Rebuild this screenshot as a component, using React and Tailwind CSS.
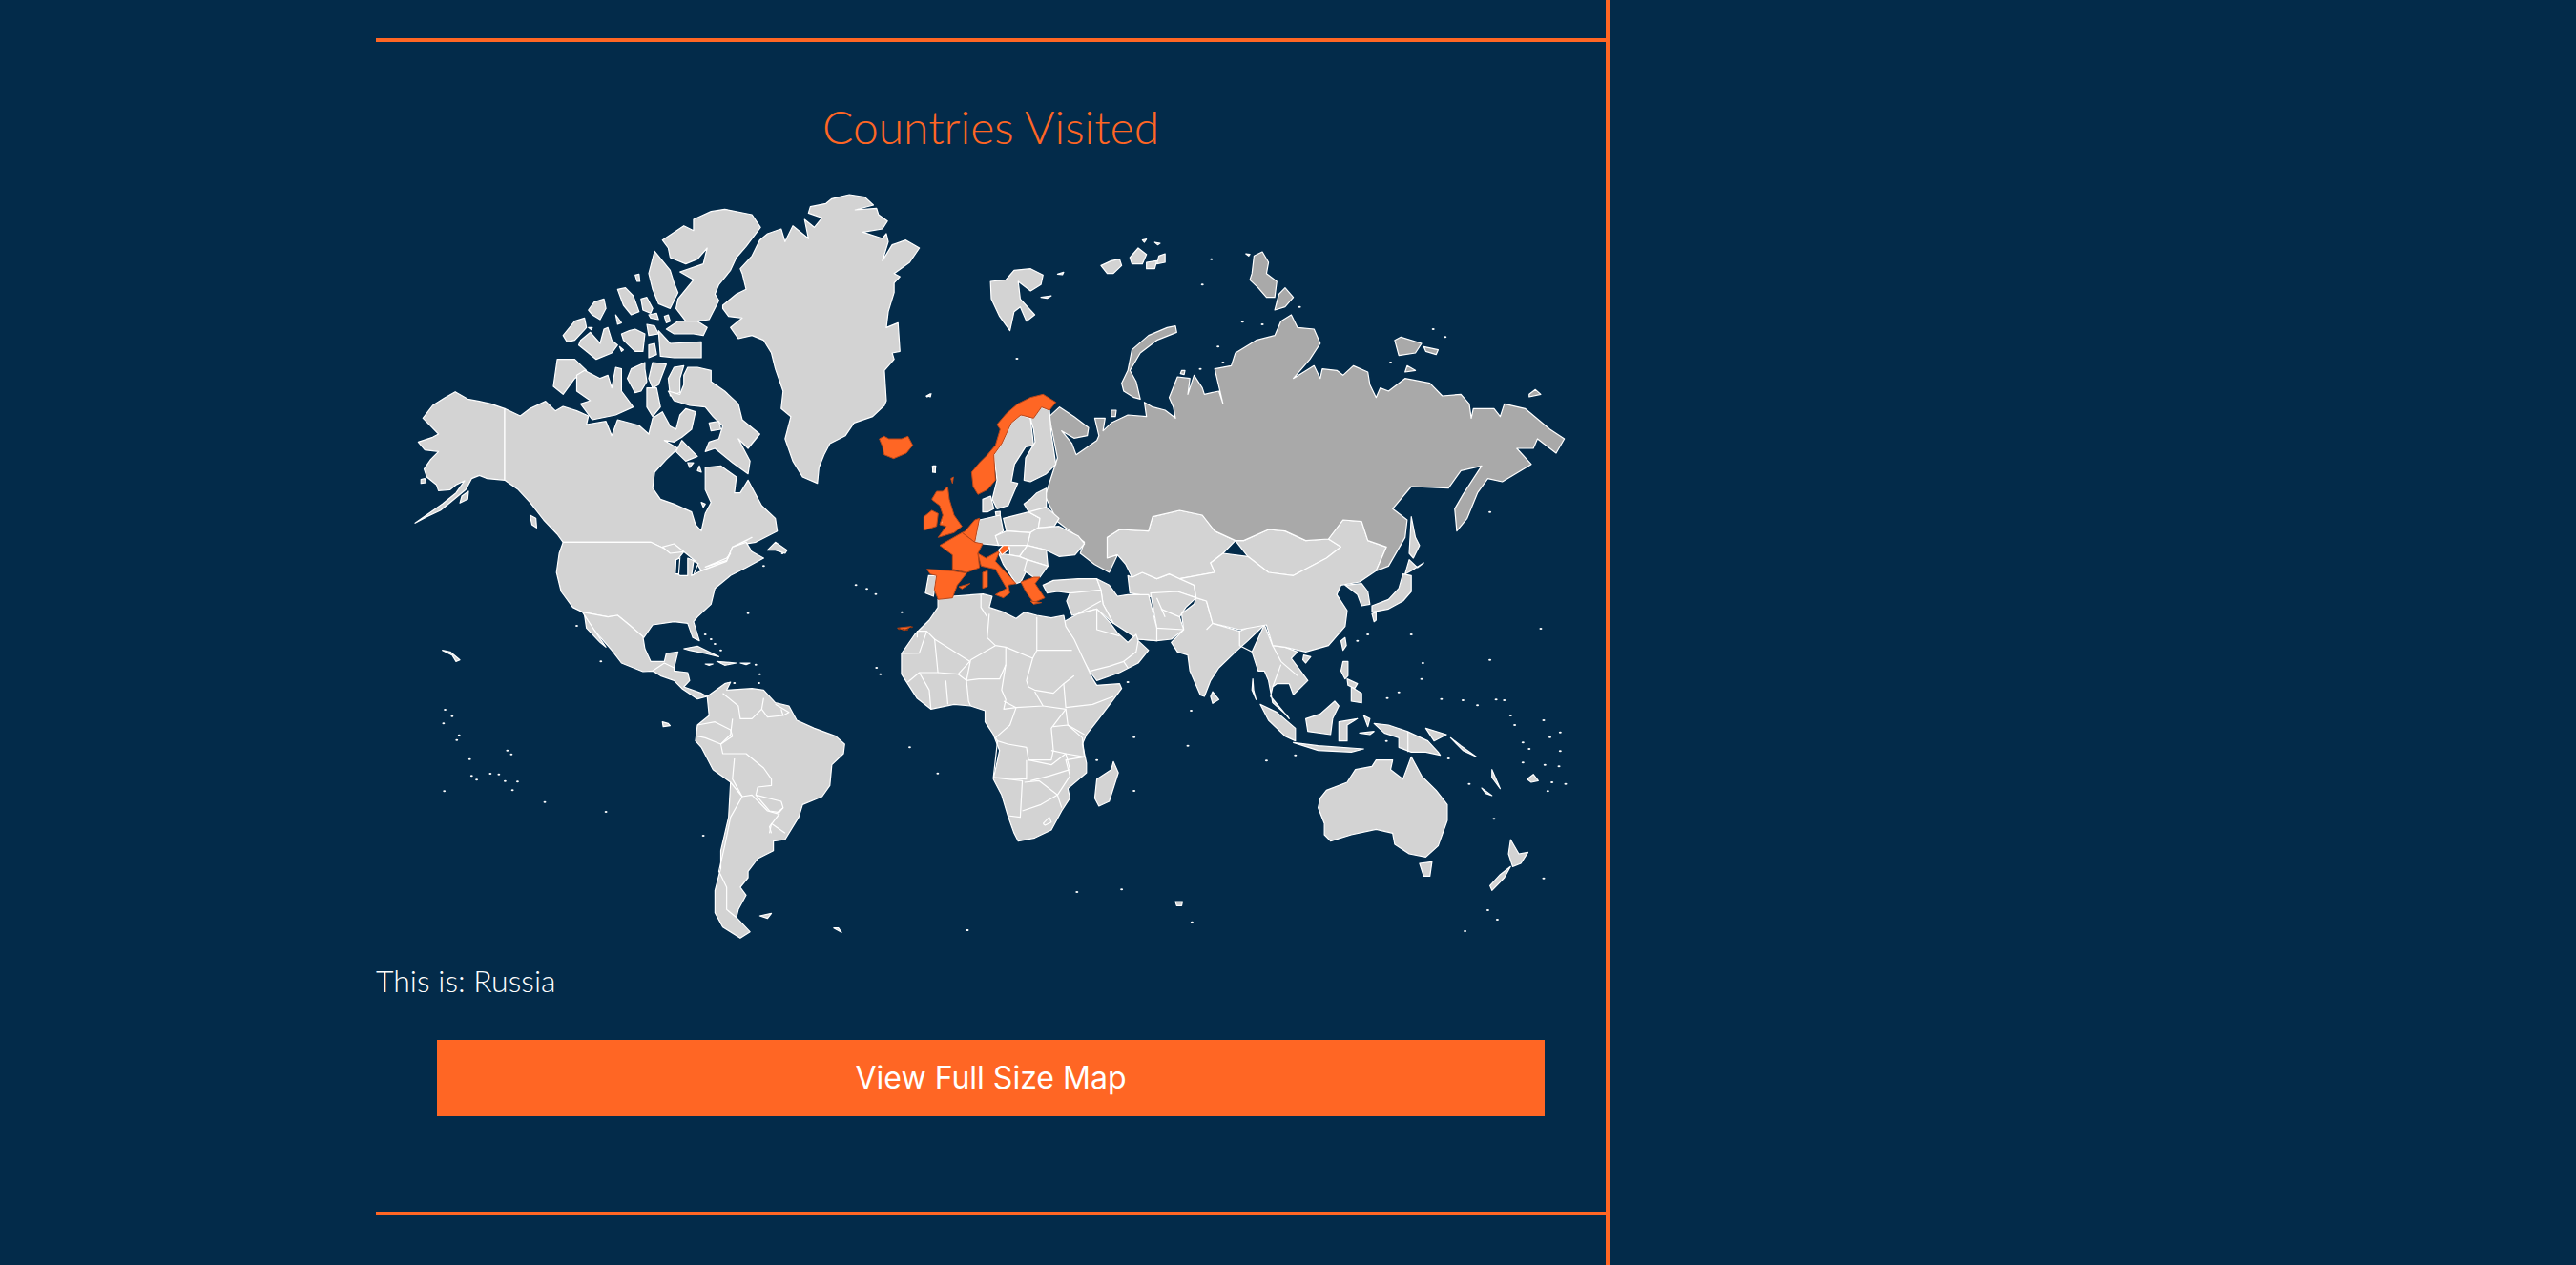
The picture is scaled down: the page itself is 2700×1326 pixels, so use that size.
import React from "react";

const LAND = "#d3d3d3";
const RUS = "#a9a9a9";
const ORG = "#ff6624";
const BG = "#032b4a";

// Coordinates below are traced in page-sized frames; each frame maps by translate + scale.
const FR = {
  W: "translate(380 180) scale(0.40816 0.33333)",
  W3: "translate(380 580) scale(0.40816 0.33333)",
  E: "translate(1000 180) scale(0.43367 0.33333)",
  E4: "translate(1000 580) scale(0.43367 0.33333)",
  EU: "translate(920 380) scale(0.33333 0.33333)",
};

const west = [
  // Alaska
  "365,745 330,730 300,722 270,715 238,692 210,712 180,735 155,775 175,800 195,825 180,835 143,850 160,875 195,880 175,905 158,935 165,960 190,985 195,1003 225,1000 240,985 262,972 240,1010 205,1045 170,1075 135,1105 165,1085 200,1065 225,1040 265,1000 280,965 300,955 320,965 365,970",
  "150,968 160,965 163,978 150,980",
  "255,1020 272,1005 270,1030 250,1042",
  // Canada
  "365,745 405,768 430,745 470,722 495,752 515,738 550,752 580,768 575,795 625,785 640,830 655,780 710,798 735,825 745,775 770,755 790,800 805,810 815,765 830,745 855,755 845,810 820,835 800,850 775,845 810,870 780,905 750,945 745,995 765,1030 800,1045 845,1070 855,1110 870,1130 880,1075 895,1040 880,1000 880,930 920,925 960,960 955,1010 970,1010 990,970 1025,1050 1060,1090 1065,1130 1010,1165 960,1175 985,1160 1000,1150 950,1180 935,1225 870,1255 855,1225 825,1195 775,1185 740,1165 515,1165 500,1140 465,1095 430,1040 400,1000 365,970",
  "1040,1190 1060,1165 1090,1190 1085,1200 1060,1190",
  "430,1080 445,1090 447,1120 435,1110",
  // USA
  "515,1165 740,1165 775,1185 825,1195 812,1215 803,1260 815,1270 835,1270 835,1215 855,1225 845,1270 870,1255 935,1225 950,1180 985,1165 1000,1195 1030,1215 985,1245 945,1270 905,1310 895,1360 860,1400 850,1415 865,1475 848,1465 835,1420 800,1415 745,1425 722,1465 685,1425 655,1395 630,1400 565,1385 540,1370 510,1320 498,1260 505,1200",
  "770,1180 800,1170 825,1195 790,1200",
  "880,1243 935,1222 945,1200 935,1215",
  // Mexico
  "565,1385 630,1400 655,1395 685,1425 720,1462 725,1500 740,1540 775,1540 780,1515 810,1510 800,1560 760,1575 745,1570 720,1572 665,1545 640,1505 590,1435",
  "570,1395 600,1450 625,1495 610,1480 575,1435",
  // Central America
  "745,1570 775,1545 800,1560 800,1570 835,1575 840,1600 825,1620 870,1640 885,1650 860,1658 820,1625 800,1600 765,1585",
  // Greenland
  "925,420 960,385 985,370 975,320 970,305 1000,265 1020,215 1040,195 1075,180 1085,220 1105,170 1145,210 1135,150 1160,175 1180,145 1145,130 1150,110 1190,100 1205,85 1250,72 1290,80 1312,105 1265,120 1320,115 1325,135 1348,155 1335,180 1285,190 1335,210 1345,195 1350,220 1335,280 1360,230 1395,215 1430,240 1405,285 1365,320 1380,330 1365,350 1365,380 1350,440 1345,490 1375,475 1380,565 1360,570 1365,590 1340,625 1345,720 1340,735 1310,770 1262,790 1240,830 1200,855 1185,890 1172,930 1168,980 1130,960 1105,910 1085,840 1100,770 1075,745 1080,690 1060,620 1050,570 1030,530 1000,515 965,525 945,490 975,460 940,455 925,430",
  // Ellesmere
  "770,215 825,170 850,185 850,150 895,125 930,118 1000,135 1022,175 985,235 960,270 945,310 915,355 905,385 915,405 890,465 860,470 830,470 805,430 810,400 830,370 850,340 815,315 875,290 885,240 860,275 830,290 790,270 785,240",
  "735,320 750,250 790,310 800,350 810,380 790,430 760,415 745,370",
  "780,495 810,470 860,470 885,490 875,515 850,510 800,510",
  "760,500 790,540 870,535 870,585 800,585 765,580",
  "655,370 675,365 695,390 710,440 690,450 670,420",
  "715,400 730,395 745,430 740,445 720,435",
  "735,450 755,445 760,465 740,460",
  "775,455 785,450 790,470 780,475",
  "595,410 620,400 625,430 610,465 590,450 580,435",
  "650,450 665,475 655,480",
  "515,515 545,470 570,460 575,490 545,530 525,535",
  "560,530 585,505 610,540 620,495 630,490 640,530 655,545 640,570 600,590 580,570 555,545",
  "665,510 685,500 700,495 725,510 720,565 700,565 670,530",
  "730,480 750,485 760,510 735,515",
  "735,545 750,540 755,575 735,585",
  "700,325 710,322 712,345 705,345",
  "660,550 670,560 665,565",
  "580,490 590,490 588,497",
  "500,590 545,590 575,625 545,650 515,700 490,675",
  "550,640 570,625 610,650 630,640 640,680 650,615 665,620 665,690 695,740 650,765 590,780 560,730 585,720 550,690",
  "690,620 725,600 725,620 730,660 715,690 700,695 680,650",
  "745,600 780,605 760,670 745,680 735,650",
  "785,650 800,615 825,610 815,650 815,695 790,705",
  "825,640 835,615 860,615 895,625 895,660 930,690 965,730 975,780 1020,825 990,870 965,840 995,910 990,950 950,915 905,870 880,880 890,850 915,840 925,800 900,770 880,740 840,735 800,720 785,690 815,700 825,670",
  "805,880 820,845 860,895 830,910",
  "730,680 755,680 765,740 745,770 730,740",
  "890,790 915,785 920,810 895,815",
  "835,915 850,915 840,930",
  "865,925 870,945 860,940",
  "870,1040 880,1045 875,1055",
  "1465,925 1472,925 1470,945 1464,945",
  "1450,705 1460,698 1458,708",
];

const west3 = [
  "825,300 860,292 915,325 880,315 840,305",
  "910,340 960,345 930,352",
  "880,348 900,348 890,352",
  "970,345 995,345 985,350",
  // South America
  "885,450 930,410 945,405 935,430 1000,425 1030,430 1060,470 1095,480 1115,525 1160,550 1215,575 1238,600 1235,630 1205,665 1200,730 1180,765 1130,790 1120,830 1085,900 1055,905 1055,935 1015,960 990,1000 990,1020 970,1050 985,1075 965,1120 960,1145 995,1190 970,1210 925,1175 905,1130 905,1060 920,990 920,935 940,830 945,720 900,680 870,610 855,590 860,540 890,510",
  "1020,1140 1050,1132 1040,1148",
  "1210,1178 1222,1178 1230,1192",
  "205,305 225,310 245,330 250,335 240,340 230,320",
  "770,530 785,535 790,542 772,545",
];

const westBorders = [
  "925,440 965,480 970,520 1000,520 1025,490 1030,455",
  "1025,490 1040,515 1080,510 1095,500 1060,475",
  "1080,510 1075,490",
  "860,540 905,530 945,555 950,575 920,600 880,580 860,575",
  "950,520 945,570 920,600 925,630 985,630 1030,675 1050,710 1050,730 1015,735 1010,760 1075,780 1080,800 1065,815",
  "955,645 950,710 975,765",
  "945,720 975,765 945,830 930,920 915,1000 935,1050 935,1120 960,1145",
  "975,765 1000,760 1040,810 1070,820 1045,860 1050,880",
  "1045,880 1050,850 1085,880",
  "1010,760 1045,810 1070,815 1080,800",
  "1450,0 1445,135",
];

const west3Dots = "212,492 230,512 208,535 248,572 242,587 275,647 280,700 293,712 328,693 350,695 366,716 398,718 385,745 210,748 468,782 625,813 875,888 372,620 382,632 612,340 550,228 1405,610 1477,692 1267,100 1295,112 1318,128 990,188 1385,185 1320,360 1330,380 1553,1185 1308,1258 880,255 895,270 905,285 920,305 1010,350 1020,380 1018,408 955,408 1030,40 1078,0";

const east = [
  // Novaya Zemlya
  "430,560 470,515 515,490 535,485 538,505 490,530 450,570 425,625 440,660 450,715 435,710 410,690 405,665 420,625",
  // Severnaya Zemlya
  "725,265 745,252 760,285 755,320 780,345 775,395 755,395 735,365 715,340 720,320",
  "785,385 800,365 820,395 800,425 775,435",
  "705,258 715,260 712,265",
  // New Siberian
  "1065,530 1080,520 1130,540 1115,570 1075,578",
  "1135,550 1170,560 1165,575 1140,565",
  "1095,610 1115,625 1090,630",
  "1390,700 1405,685 1418,700 1390,708",
  "380,750 392,750 390,770 380,770",
  "550,625 558,625 556,638 547,635",
];

const eastRussia = "230,770 255,740 290,770 325,805 322,830 290,838 260,815 285,855 295,890 345,845 350,830 340,775 365,775 360,815 380,790 420,765 465,770 460,725 480,740 510,750 535,775 530,740 520,710 540,645 570,650 565,700 580,640 600,680 605,700 640,690 650,730 630,620 670,610 680,570 730,530 775,515 790,470 815,450 830,490 870,495 885,540 860,590 820,650 870,610 885,650 890,620 925,625 940,640 965,610 1000,630 1005,670 1020,710 1030,680 1050,690 1090,650 1150,665 1180,705 1225,700 1245,730 1250,775 1255,745 1305,745 1320,770 1330,730 1380,745 1440,810 1475,840 1455,885 1410,840 1400,870 1360,870 1395,920 1325,975 1290,965 1265,1010 1240,1090 1215,1130 1210,1060 1230,1015 1275,925 1225,940 1195,995 1105,990 1060,1060 1095,1095 1090,1150 1050,1240 1020,1255 1045,1180 1000,1160 985,1100 940,1095 905,1155 850,1160 800,1130 760,1125 700,1160 680,1160 630,1130 600,1080 545,1065 480,1085 470,1130 400,1125 370,1150 370,1215 395,1205 375,1260 340,1235 305,1200 315,1165 250,1100 220,1020 250,900";

const eastGrey = [
  "1105,1085 1115,1150 1125,1175 1110,1215 1100,1200",
];

const eastLight = [
  // Svalbard
  "88,345 125,340 145,310 185,305 215,325 210,355 185,375 155,345 160,400 195,450 175,470 160,425 145,440 135,500 110,455 90,400",
  "250,322 265,316 262,324",
  "210,395 235,390 225,398",
  // Franz Josef
  "355,295 380,280 400,275 405,295 385,320 370,320",
  "425,270 445,240 465,260 455,290 430,290",
  "465,285 490,280 485,305 465,305",
  "495,265 510,258 510,285 490,290",
  "455,215 465,212 460,222",
  "485,222 498,225 492,230",
  // Kazakhstan
  "370,1150 400,1125 470,1130 480,1085 545,1065 600,1080 630,1130 680,1160 650,1200 620,1230 630,1260 545,1280 520,1265 490,1280 455,1260 430,1275 415,1235 395,1205 370,1215",
  // Mongolia
  "680,1160 700,1160 760,1125 800,1130 850,1160 905,1155 935,1180 900,1215 820,1270 760,1260 710,1210",
  // China
  "710,1210 760,1260 820,1270 900,1215 935,1180 905,1155 940,1095 985,1100 1000,1160 1045,1180 1020,1255 980,1290 935,1300 925,1330 950,1380 945,1430 905,1490 850,1510 800,1495 770,1490 755,1425 690,1440 625,1420 610,1350 585,1340 580,1300 545,1280 630,1260 620,1230 650,1200",
];

const e4Land = [
  // Central Asia
  "430,75 455,60 490,80 520,65 550,80 580,100 585,140 540,120 490,140 470,135 425,125 420,70",
  // Afghanistan + Pakistan
  "475,125 540,120 585,140 560,170 545,200 555,240 525,270 490,275 445,270 490,235",
  // Turkey
  "215,100 240,85 300,80 345,80 355,115 310,125 280,125 250,120 225,125",
  // Iran
  "345,80 375,100 395,135 420,130 470,130 490,235 490,275 445,270 415,245 385,220 360,160 355,115",
  // Levant + Iraq
  "280,125 355,115 360,160 385,220 345,175 300,190 285,195 272,150",
  // Arabia
  "265,215 300,190 345,175 375,215 395,250 420,280 440,255 445,275 470,305 445,345 400,375 345,400 330,375 300,310 270,250",
  // India
  "585,140 610,150 625,220 690,245 725,225 750,225 710,275 680,310 640,360 620,400 605,450 595,445 570,370 565,320 540,310 525,280 555,240 550,190 580,160",
  "625,435 640,460 625,472 620,450",
  // Indochina
  "720,310 750,225 770,290 800,295 830,310 815,330 855,400 820,445 810,410 780,410 770,420 765,450 810,520 805,510 770,470 760,400 750,370 735,370",
  // Korea
  "945,100 985,95 1000,120 1005,160 985,165 975,130",
  // Japan
  "1100,20 1120,45 1135,30 1105,55 1090,65",
  "1085,65 1105,70 1105,120 1085,150 1050,175 1010,185 1010,165 1050,145 1075,110",
  "1010,190 1020,185 1020,210 1015,215",
  "935,275 945,265 948,290 940,305",
  "845,320 862,325 850,345 843,335",
  // Philippines
  "940,340 952,340 952,385 945,395 935,370",
  "960,420 985,440 985,470 960,465",
  "950,395 975,410 968,425 952,415",
  // Borneo
  "850,520 885,505 920,465 930,480 915,520 910,570 855,560",
  // Sumatra
  "740,475 780,500 825,550 825,590 800,575 760,525",
  // Java
  "820,595 880,605 990,615 960,625 880,620",
  // Sulawesi
  "930,530 975,520 950,540 950,590 930,590",
  "980,565 1015,560 1005,570",
  "990,510 1005,520 1000,545",
  // New Guinea
  "1015,535 1050,540 1095,560 1145,590 1170,625 1175,635 1140,625 1105,625 1075,610 1075,580 1040,565",
  "1140,550 1190,570 1160,590",
  "1200,580 1225,605 1262,640 1230,620",
  "1300,680 1310,710 1320,740 1300,705",
  "1275,738 1300,762 1285,755",
  "1385,710 1400,695 1412,715 1395,720",
  // Andaman
  "722,395 720,430 730,460 724,430",
  // Australia
  "885,770 900,745 950,720 970,680 1010,670 1020,650 1060,650 1055,680 1085,710 1105,640 1130,700 1165,745 1192,790 1192,840 1170,920 1140,955 1100,945 1065,915 1060,880 1020,868 960,885 910,905 895,885 895,850 880,800",
  "1125,975 1155,970 1150,1015 1135,1015",
  // New Zealand
  "1345,900 1365,945 1387,940 1370,975 1350,985 1340,945",
  "1345,985 1330,1020 1300,1060 1295,1045 1320,1010",
  // Madagascar
  "385,655 397,690 375,780 350,795 340,770 345,710 380,680",
  "535,1095 552,1095 550,1108 538,1108",
  // Africa
  "-39,145 -5,135 70,128 92,135 85,170 120,185 150,205 170,185 200,195 235,203 265,195 270,230 290,270 335,395 345,415 400,410 405,425 385,460 350,520 320,570 310,600 320,660 320,690 275,740 280,770 260,810 235,870 195,895 155,905 145,880 130,825 115,760 95,710 110,620 95,570 75,530 75,495 40,480 0,475 -56,490 -90,455 -127,380 -127,315 -95,255 -60,210 -39,170",
];

const e4Lines = [
  "65,130 65,170 80,200",
  "85,190 80,265 100,290 40,335",
  "200,200 200,305 285,305",
  "100,290 125,295 190,330 200,305",
  "190,330 175,400 180,420",
  "40,335 30,400 60,395 110,395 125,350 125,295",
  "125,350 115,430 125,460 120,490 150,485",
  "30,400 35,465 40,480",
  "180,420 195,430 240,440 265,410 290,385",
  "265,410 270,485 335,475 385,450",
  "120,465 150,485 215,480 195,435",
  "150,485 135,540 100,580 105,590 130,600 175,610 180,650 235,650 240,620 235,550 270,490 215,480",
  "270,490 275,540 315,570",
  "240,545 275,540 310,580 315,640 270,630 235,620",
  "105,590 95,705 175,710 175,650",
  "180,650 235,665 270,630 280,680 230,700 185,715",
  "315,640 270,650 280,700 250,760 260,800",
  "95,705 165,715 160,830 130,825",
  "170,720 205,715 250,760 210,790 165,810",
  "215,850 230,830 235,845 220,855 215,850",
  "-127,315 -84,314 -66,245 -89,245 -89,265",
  "-66,245 -47,270 -39,375 -84,375 -112,405",
  "-39,375 10,380 38,340 -47,270",
  "-84,375 -60,430 -56,490",
  "-20,400 -15,475",
  "10,380 30,400",
  "330,370 345,365 375,355 410,340 420,360",
  "410,340 440,310 445,275",
  "345,175 345,240 400,260",
  "300,190 355,150",
  "500,175 545,200",
  "490,235 555,240",
  "490,140 510,200",
  "625,220 610,240",
  "690,245 690,290 720,310",
  "770,290 790,340 830,385",
  "1097,560 1097,625",
  "770,420 790,350",
];

const e4Dots = "1418,237 1105,255 1295,335 1133,345 1130,395 1075,437 1047,455 1178,458 1230,462 1265,478 1310,460 1330,462 1345,510 1355,540 1425,525 1465,563 1440,578 1375,595 1390,615 1465,622 1375,658 1428,665 1462,670 1445,720 1478,725 1435,748 1245,725 1305,835 1425,1022 1290,1122 1313,1152 1235,1188 297,1065 405,1057 575,1160 32,1185 435,578 565,605 755,652 825,635 573,495 435,747 420,405 345,650 1045,590 1195,645 1000,255 975,275";
const eDots = "600,355 622,275 697,472 745,480 638,550 650,600 835,425 1055,600 1158,495 1187,520 1295,1070 152,588 595,620";

const eu = {
  land: [
    // Sweden
    "365,290 390,255 420,190 450,165 480,175 490,260 465,265 430,320 420,375 440,380 410,450 375,460 360,430 375,370",
    // Finland
    "480,175 510,140 540,150 545,220 560,320 530,350 480,375 460,370 465,300 495,250 490,210",
    // Denmark
    "330,430 355,420 365,460 345,470 330,470",
    "370,470 385,468 385,482 372,482",
    // Germany
    "305,565 320,495 385,480 395,530 370,545 380,575 330,570",
    // Poland
    "395,490 475,470 510,490 505,520 480,535 405,530",
    // Baltics
    "480,430 500,410 530,395 530,460 510,490 475,470 460,445",
    // Belarus
    "475,470 530,455 570,490 555,515 505,520 510,490",
    // Ukraine
    "480,535 505,520 570,515 630,545 650,570 620,605 570,610 530,590 470,575",
    // Czech + Slovakia
    "370,545 405,530 480,535 470,575 415,575 395,575 380,575",
    // Romania
    "470,575 530,590 535,640 470,620 445,610",
    // Hungary
    "415,575 470,575 445,610 415,605",
    // Former Yugoslavia + Albania
    "380,600 415,605 445,610 470,620 470,650 450,690 435,695 395,635",
    // Bulgaria
    "470,620 535,640 510,675 490,675 460,655",
  ],
  org: [
    "5,240 20,232 35,240 75,240 95,232 110,260 90,285 50,302 20,290 15,265",
    "170,430 185,405 205,405 220,390 225,430 240,480 265,515 240,535 190,550 215,515 195,510 205,480 195,450 175,435",
    "145,485 170,465 190,475 185,515 145,528",
    "230,365 238,360 235,380",
    "295,345 320,315 345,290 370,260 385,210 375,195 405,160 440,130 480,110 520,100 560,125 540,150 515,140 490,175 450,165 420,190 390,255 365,290 370,370 345,400 315,415 300,390",
    "275,530 305,495 320,490 305,565 265,535",
    "195,575 265,535 305,565 330,570 315,600 320,645 280,660 235,650 235,605",
    "155,650 235,655 280,662 250,700 235,740 190,745 178,715 185,670 165,665",
    "315,600 340,615 385,590 370,625 435,695 410,700 415,725 395,740 370,730 405,710 370,650 325,640 320,620",
    "380,590 395,575 415,575 410,590 390,605",
    "330,660 345,655 345,705 330,710",
    "255,705 290,695 265,712",
    "450,690 490,675 510,675 495,695 525,740 490,755 465,720",
    "480,750 515,755 490,760",
    "62,835 105,830 85,842",
  ],
  port: "160,670 185,670 175,735 150,725",
};

function Land({ list, fill = LAND }) {
  return list.map((p, i) => (
    <polygon key={i} points={p} fill={fill} stroke="#fff" strokeWidth="1.2" strokeLinejoin="round" vectorEffect="non-scaling-stroke" />
  ));
}

function Dots({ list, fill = "#fff" }) {
  return list.split(" ").map((p, i) => {
    const [x, y] = p.split(",");
    return <ellipse key={i} cx={x} cy={y} rx="3.5" ry="3" fill={fill} />;
  });
}

function WorldMap() {
  return (
    <svg viewBox="394 190 1289 800" className="block w-full h-[800px]">
      <g transform={FR.E4}>
        <Land list={e4Land} />
        {e4Lines.map((p, i) => (
          <polyline key={i} points={p} fill="none" stroke="#fff" strokeWidth="1.2" strokeLinejoin="round" vectorEffect="non-scaling-stroke" />
        ))}
        <Dots list={e4Dots} />
      </g>
      <g transform={FR.E}>
        <Land list={eastLight} />
        <Land list={east} fill={RUS} />
        <polygon points={eastRussia} fill={RUS} stroke="#fff" strokeWidth="1.2" strokeLinejoin="round" vectorEffect="non-scaling-stroke" />
        <Land list={eastGrey} />
        <Dots list={eDots} />
      </g>
      <g transform={FR.EU}>
        <Land list={eu.land} />
        <polygon points={eu.port} fill={LAND} stroke="#fff" strokeWidth="1.2" vectorEffect="non-scaling-stroke" />
        {eu.org.map((p, i) => (
          <polygon key={i} points={p} fill={ORG} stroke="#b9471a" strokeWidth="1" strokeLinejoin="round" vectorEffect="non-scaling-stroke" />
        ))}
        <polygon points="395,575 415,575 410,590 390,605 380,590" fill={ORG} stroke="#fff" strokeWidth="1.2" vectorEffect="non-scaling-stroke" />
        <polygon points="170,325 183,325 183,348 172,345" fill="#fff" />
        <polygon points="150,105 165,97 165,105 155,110" fill="#fff" />
      </g>
      <g transform={FR.W}>
        <Land list={west} />
        <polygon points="805,1220 815,1215 812,1265 803,1265" fill={BG} stroke="#fff" strokeWidth="1.2" vectorEffect="non-scaling-stroke" />
        <polygon points="850,1225 862,1232 850,1268 845,1268" fill={BG} stroke="#fff" strokeWidth="1.2" vectorEffect="non-scaling-stroke" />
        <polyline points="1488,1100 1488,1105" stroke="#fff" fill="none" />
      </g>
      <g transform={FR.W3}>
        <Land list={west3} />
        {westBorders.slice(0, -1).map((p, i) => (
          <polyline key={i} points={p} fill="none" stroke="#fff" strokeWidth="1.2" strokeLinejoin="round" vectorEffect="non-scaling-stroke" />
        ))}
        <Dots list={west3Dots} />
        <Dots list="1378,238 1390,240 1398,240 1410,232" fill="#8a3512" />
      </g>
    </svg>
  );
}

export default function App() {
  return (
    <div className="h-[1326px] overflow-hidden bg-[#032b4a] flex">
      <div className="ml-[394px] w-[1293px] h-full border-r-4 border-[#ff6624] pt-[40px]">
        <div className="h-1 bg-[#ff6624]" />
        <h2 className="mt-[56px] h-[66px] leading-[66px] text-center text-[48px] font-light text-[#ff6624] font-['Lato',sans-serif]">
          Countries Visited
        </h2>
        <div className="mt-[24px]">
          <WorldMap />
        </div>
        <p className="mt-[20px] h-[36px] leading-[36px] text-[32px] font-light text-white font-['Lato',sans-serif]">
          This is: Russia
        </p>
        <div className="mt-[44px] mx-[64px] h-[80px] bg-[#ff6624] flex items-center justify-center text-[32px] text-white font-['Inter',sans-serif]">
          View Full Size Map
        </div>
        <div className="mt-[100px] h-1 bg-[#ff6624]" />
      </div>
    </div>
  );
}
